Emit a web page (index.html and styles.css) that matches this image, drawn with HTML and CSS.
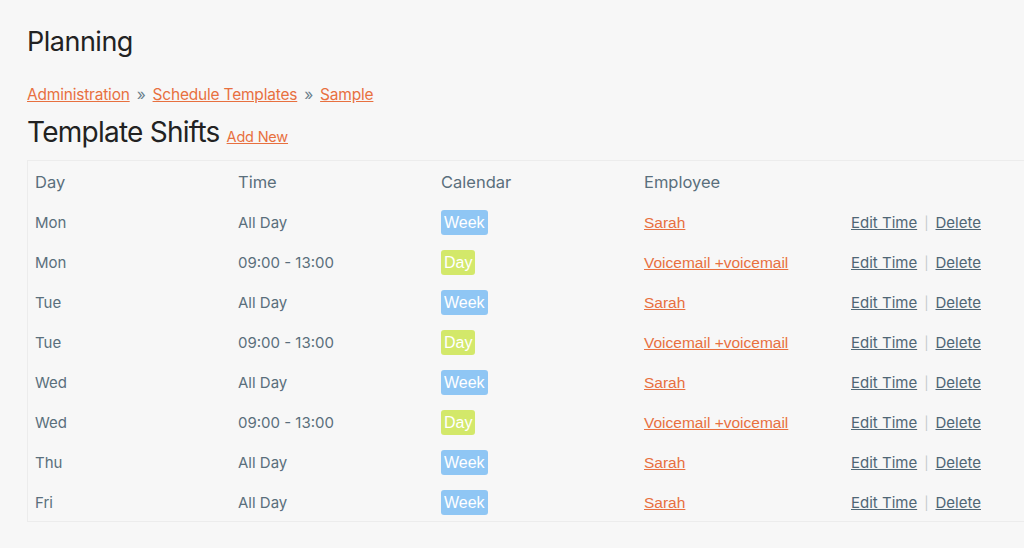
FILE: index.html
```html
<!DOCTYPE html>
<html lang="en">
<head>
<meta charset="utf-8">
<title>Planning</title>
<link rel="stylesheet" href="styles.css">
</head>
<body>
<div class="page">
  <h1 class="title">Planning</h1>
  <nav class="crumbs">
    <a href="#">Administration</a><span class="sep">»</span><a href="#">Schedule Templates</a><span class="sep">»</span><a href="#">Sample</a>
  </nav>
  <div class="section-head">
    <h2 class="subtitle">Template Shifts</h2>
    <a href="#" class="add">Add New</a>
  </div>
  <div class="table-wrap">
    <table class="shifts">
      <thead>
        <tr><th class="c1">Day</th><th class="c2">Time</th><th class="c3">Calendar</th><th class="c4">Employee</th><th class="c5"></th></tr>
      </thead>
      <tbody>
        <tr><td>Mon</td><td>All Day</td><td><span class="badge week">Week</span></td><td><a class="emp" href="#">Sarah</a></td><td class="actions"><a href="#">Edit Time</a><span class="bar">|</span><a href="#">Delete</a></td></tr>
        <tr><td>Mon</td><td>09:00 - 13:00</td><td><span class="badge day">Day</span></td><td><a class="emp" href="#">Voicemail +voicemail</a></td><td class="actions"><a href="#">Edit Time</a><span class="bar">|</span><a href="#">Delete</a></td></tr>
        <tr><td>Tue</td><td>All Day</td><td><span class="badge week">Week</span></td><td><a class="emp" href="#">Sarah</a></td><td class="actions"><a href="#">Edit Time</a><span class="bar">|</span><a href="#">Delete</a></td></tr>
        <tr><td>Tue</td><td>09:00 - 13:00</td><td><span class="badge day">Day</span></td><td><a class="emp" href="#">Voicemail +voicemail</a></td><td class="actions"><a href="#">Edit Time</a><span class="bar">|</span><a href="#">Delete</a></td></tr>
        <tr><td>Wed</td><td>All Day</td><td><span class="badge week">Week</span></td><td><a class="emp" href="#">Sarah</a></td><td class="actions"><a href="#">Edit Time</a><span class="bar">|</span><a href="#">Delete</a></td></tr>
        <tr><td>Wed</td><td>09:00 - 13:00</td><td><span class="badge day">Day</span></td><td><a class="emp" href="#">Voicemail +voicemail</a></td><td class="actions"><a href="#">Edit Time</a><span class="bar">|</span><a href="#">Delete</a></td></tr>
        <tr><td>Thu</td><td>All Day</td><td><span class="badge week">Week</span></td><td><a class="emp" href="#">Sarah</a></td><td class="actions"><a href="#">Edit Time</a><span class="bar">|</span><a href="#">Delete</a></td></tr>
        <tr><td>Fri</td><td>All Day</td><td><span class="badge week">Week</span></td><td><a class="emp" href="#">Sarah</a></td><td class="actions"><a href="#">Edit Time</a><span class="bar">|</span><a href="#">Delete</a></td></tr>
      </tbody>
    </table>
  </div>
</div>
</body>
</html>
```

FILE: styles.css
```css
html, body {
  margin: 0;
  padding: 0;
  background: #f7f7f7;
  overflow: hidden;
}
body {
  font-family: Inter, "Noto Sans", sans-serif;
  color: #222;
}
.page {
  padding: 22px 0 0 27px;
}
.title {
  margin: 0;
  font-size: 27px;
  font-weight: 400;
  line-height: 40px;
  letter-spacing: -0.5px;
  color: #222;
}
.crumbs {
  margin-top: 22px;
  font-size: 15.5px;
  line-height: 22px;
  letter-spacing: -0.2px;
}
.crumbs a, .add {
  color: #e8703f;
}
.crumbs .sep {
  color: #6b7f8c;
  margin: 0 7px 0 7px;
}
.section-head {
  display: flex;
  align-items: baseline;
  gap: 7px;
  margin-top: 8px;
}
.subtitle {
  margin: 0;
  font-size: 28px;
  font-weight: 400;
  line-height: 36px;
  letter-spacing: -0.75px;
  color: #222;
}
.add {
  font-size: 14.5px;
  letter-spacing: -0.2px;
}
.table-wrap {
  margin-top: 10px;
  width: 1020px;
  border: 1px solid #ececec;
}
.shifts {
  border-collapse: collapse;
  width: 100%;
  font-size: 15px;
  color: #5a6f7c;
}
.shifts th, .shifts td {
  text-align: left;
  padding: 2px 0 0 7px;
  height: 38px;
  vertical-align: middle;
}
.shifts th {
  font-weight: 400;
  font-size: 16.5px;
}
.c1, .c2, .c3 { width: 196px; }
.c4 { width: 200px; }
.badge {
  display: inline-block;
  font-family: "Liberation Sans", Arial, sans-serif;
  font-size: 16px;
  color: #fff;
  line-height: 25px;
  padding: 0 3px;
  border-radius: 3px;
}
.badge.week { background: #8fc6f4; }
.badge.day { background: #d3e86a; }
.emp {
  font-family: "Liberation Sans", Arial, sans-serif;
  font-size: 15.5px;
  color: #e8703f;
}
.actions {
  font-size: 15px;
}
.actions a {
  color: #4f6675;
}
.actions .bar {
  color: #c4c9cc;
  margin: 0 7px;
  font-size: 13px;
}
```
